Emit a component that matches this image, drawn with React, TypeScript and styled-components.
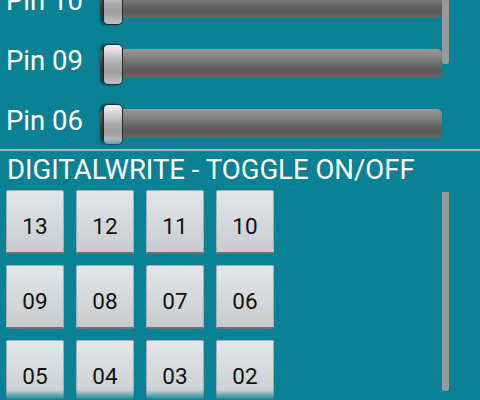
import styled, { createGlobalStyle } from "styled-components";

const pwmPins = ["11", "10", "09", "06", "05", "03"];
const digitalPins = [
  "13", "12", "11", "10",
  "09", "08", "07", "06",
  "05", "04", "03", "02",
];

const GlobalStyle = createGlobalStyle`
  html, body {
    margin: 0;
    padding: 0;
    background: #0a8194;
    overflow: hidden;
  }
  body {
    font-family: Roboto, "Noto Sans", sans-serif;
  }
`;

export default function App() {
  return (
    <>
      <GlobalStyle />
      <Screen>
        <SliderPane>
          <SliderList>
            {pwmPins.map((pin) => (
              <SliderRow key={pin}>
                <PinLabel>Pin {pin}</PinLabel>
                <Track>
                  <Thumb />
                </Track>
              </SliderRow>
            ))}
          </SliderList>
          <ScrollBar $top={0} $height={64} />
          <FadeEdge />
        </SliderPane>
        <Divider />
        <Heading>DIGITALWRITE - TOGGLE ON/OFF</Heading>
        <GridPane>
          <ButtonGrid>
            {digitalPins.map((pin) => (
              <ToggleButton key={pin} type="button">
                {pin}
              </ToggleButton>
            ))}
          </ButtonGrid>
          <ScrollBar $top={6} $height={199} />
          <FadeEdge />
        </GridPane>
      </Screen>
    </>
  );
}

const Screen = styled.div`
  width: 480px;
  height: 400px;
  display: flex;
  flex-direction: column;
  background: #0a8194;
  color: #ffffff;
  overflow: hidden;
`;

const SliderPane = styled.div`
  position: relative;
  height: 149px;
  flex: none;
  overflow: hidden;
`;

const SliderList = styled.div`
  display: flex;
  flex-direction: column;
  margin-top: -87px;
`;

const SliderRow = styled.div`
  display: flex;
  align-items: center;
  height: 60px;
`;

const PinLabel = styled.div`
  width: 94px;
  padding-left: 6px;
  font-size: 27.5px;
  line-height: 32px;
  margin-top: -4px;
  white-space: nowrap;
`;

const Track = styled.div`
  position: relative;
  width: 342px;
  height: 29px;
  border-radius: 5px;
  background: linear-gradient(
    to bottom,
    #989898 0%,
    #858585 25%,
    #646464 60%,
    #5a5a5a 75%,
    #666666 100%
  );
`;

const Thumb = styled.div`
  position: absolute;
  left: 3px;
  top: -5px;
  width: 18px;
  height: 39px;
  border: 1px solid #1e2a2c;
  border-radius: 5px;
  background: linear-gradient(
    to bottom,
    #f4f4f4 0%,
    #d8d8d8 18%,
    #a9a9a9 50%,
    #9c9c9c 70%,
    #c4c4c4 100%
  );
  box-shadow: -3px 0 2px rgba(0, 0, 0, 0.45);
`;

const ScrollBar = styled.div<{ $top: number; $height: number }>`
  position: absolute;
  left: 442px;
  top: ${(p) => p.$top}px;
  width: 7px;
  height: ${(p) => p.$height}px;
  border-radius: 0 0 2px 2px;
  background: #979a9b;
`;

const FadeEdge = styled.div`
  position: absolute;
  left: 0;
  right: 0;
  bottom: 0;
  height: 10px;
  background: linear-gradient(to bottom, rgba(10, 129, 148, 0), #0a8194);
  pointer-events: none;
`;

const Divider = styled.div`
  height: 2px;
  flex: none;
  background: #a8b4b7;
`;

const Heading = styled.div`
  flex: none;
  padding: 3px 0 0 7px;
  font-size: 27.5px;
  line-height: 32px;
  white-space: nowrap;
`;

const GridPane = styled.div`
  position: relative;
  flex: 1;
  overflow: hidden;
`;

const ButtonGrid = styled.div`
  display: grid;
  grid-template-columns: repeat(4, 58px);
  grid-auto-rows: 64px;
  column-gap: 12px;
  row-gap: 11px;
  padding: 4px 0 0 6px;
`;

const ToggleButton = styled.button`
  appearance: none;
  display: grid;
  place-items: center;
  padding: 9px 0 0;
  border: 1px solid #a9adb0;
  border-bottom: 2px solid #6c7073;
  border-radius: 2px;
  background: linear-gradient(to bottom, #e3e6e9 0%, #d6d9dc 50%, #c8cbce 100%);
  color: #111111;
  font-family: Roboto, "Noto Sans", sans-serif;
  font-size: 22.5px;
  cursor: pointer;
`;
